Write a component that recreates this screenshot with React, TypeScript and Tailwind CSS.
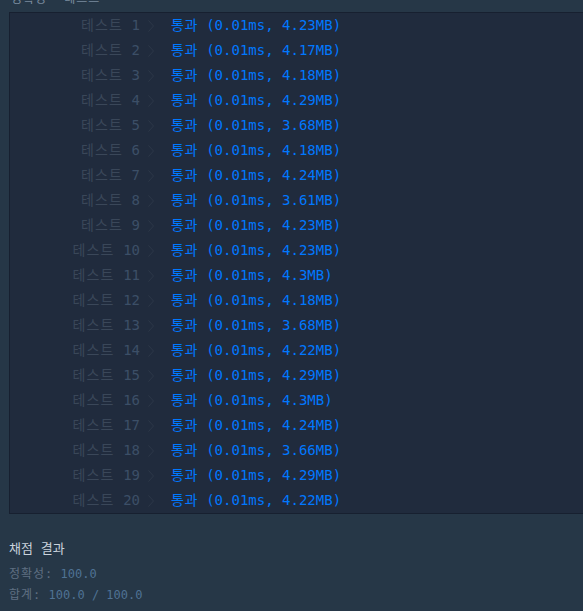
const results: Array<[number, string]> = [
  [1, "4.23MB"],
  [2, "4.17MB"],
  [3, "4.18MB"],
  [4, "4.29MB"],
  [5, "3.68MB"],
  [6, "4.18MB"],
  [7, "4.24MB"],
  [8, "3.61MB"],
  [9, "4.23MB"],
  [10, "4.23MB"],
  [11, "4.3MB"],
  [12, "4.18MB"],
  [13, "3.68MB"],
  [14, "4.22MB"],
  [15, "4.29MB"],
  [16, "4.3MB"],
  [17, "4.24MB"],
  [18, "3.66MB"],
  [19, "4.29MB"],
  [20, "4.22MB"],
];

const mono = "font-['DejaVu_Sans_Mono','Noto_Sans_CJK_KR',monospace]";

function Chevron() {
  return (
    <svg width="6" height="12" viewBox="0 0 6 12" fill="none" className="block">
      <path d="M0.5 0.5L5.5 6L0.5 11.5" stroke="#2c3849" strokeWidth="1" />
    </svg>
  );
}

export default function App() {
  return (
    <div className={`w-[583px] h-[611px] overflow-hidden bg-[#263747] ${mono}`}>
      <div className="h-[12px] overflow-hidden">
        <div className="flex gap-[17px] pl-[11px] -mt-[8px] text-[12px] leading-[14px] tracking-[1px] text-[#7a8b9e]">
          <span>정확성</span>
          <span>테스트</span>
        </div>
      </div>

      <div className="ml-[9px] -mr-[4px] bg-[#202b3d] border border-[#172030]">
        {results.map(([n, mem]) => (
          <div key={n} className="flex items-center h-[25px] text-[14px]">
            <div className="w-[130px] text-right whitespace-pre">
              <span className="text-[#3a4759] tracking-[1.2px]">테스트</span>
              <span className="text-[#3c4f67]"> {n}</span>
            </div>
            <div className="w-[31px] flex justify-start pl-[8px]">
              <Chevron />
            </div>
            <div className="text-[#0078ff] whitespace-pre">
              <span className="tracking-[0.5px]">통과</span> (0.01ms, {mem})
            </div>
          </div>
        ))}
      </div>

      <div className="pl-[9px] pt-[25px]">
        <div className="text-[13px] leading-[20px] text-[#c9d2dc] whitespace-pre">
          채점 결과
        </div>
        <div className="mt-[5px] text-[12px] leading-[21px] whitespace-pre">
          <div>
            <span className="text-[#5f6f82] tracking-[1px]">정확성:</span>
            <span className="text-[#4f7294]"> 100.0</span>
          </div>
          <div>
            <span className="text-[#5f6f82] tracking-[1px]">합계:</span>
            <span className="text-[#4f7294]"> 100.0 / 100.0</span>
          </div>
        </div>
      </div>
    </div>
  );
}
